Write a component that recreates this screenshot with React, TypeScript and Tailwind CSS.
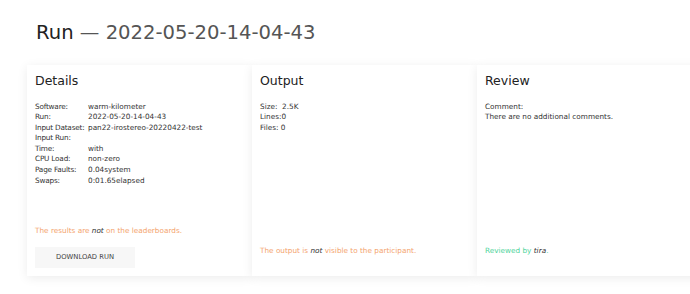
const font = { fontFamily: '"DejaVu Sans", Verdana, sans-serif' }

const details: [string, string][] = [
  ["Software:", "warm-kilometer"],
  ["Run:", "2022-05-20-14-04-43"],
  ["Input Dataset:", "pan22-irostereo-20220422-test"],
  ["Input Run:", ""],
  ["Time:", "with"],
  ["CPU Load:", "non-zero"],
  ["Page Faults:", "0.04system"],
  ["Swaps:", "0:01.65elapsed"],
]

const Card = ({ title, children }: { title: string; children: React.ReactNode }) => {
  return (
    <div className="flex h-[211px] w-[225px] shrink-0 flex-col bg-white px-2 pt-[9px] shadow-[0_2px_10px_rgba(0,0,0,0.08)]">
      <h2 className="text-[12.5px] leading-[14.5px] text-[#222]">{title}</h2>
      {children}
    </div>
  )
}

export default function App() {
  return (
    <div className="h-[294px] w-[690px] overflow-hidden bg-white text-[#333]" style={font}>
      <h1 className="pl-9 pt-[21px] text-[19.6px] leading-[23px]">
        <span className="text-[#222]">Run</span>
        <span className="text-[#555]"> — 2022-05-20-14-04-43</span>
      </h1>

      <div className="mt-[21px] flex pl-[27px]">
        <Card title="Details">
          <div className="mt-[13px] grid grid-cols-[53px_auto] text-[7.3px] leading-[10.6px] text-[#333]">
            {details.map(([k, v]) => (
              <div key={k} className="contents">
                <span className="whitespace-nowrap tracking-[-0.2px]">{k}</span>
                <span className="whitespace-nowrap">{v || "\u00a0"}</span>
              </div>
            ))}
          </div>
          <p className="mt-auto text-[7.3px] leading-[10px] text-[#f4a46e]">
            The results are <em className="text-[#333]">not</em> on the leaderboards.
          </p>
          <button className="mb-2 mt-[11px] h-[21px] w-[100px] bg-[#f7f7f7] text-[6.8px] text-[#444]">
            DOWNLOAD RUN
          </button>
        </Card>

        <Card title="Output">
          <div className="mt-[13px] text-[7.3px] leading-[10.6px] text-[#333]">
            <p>Size:&nbsp; 2.5K</p>
            <p>Lines:0</p>
            <p>Files: 0</p>
          </div>
          <p className="mb-[20px] mt-auto text-[7.3px] leading-[10px] text-[#f4a46e]">
            The output is <em className="text-[#333]">not</em> visible to the participant.
          </p>
        </Card>

        <Card title="Review">
          <div className="mt-[13px] text-[7.3px] leading-[10.6px] text-[#333]">
            <p>Comment:</p>
            <p>There are no additional comments.</p>
          </div>
          <p className="mb-[20px] mt-auto text-[7.3px] leading-[10px] text-[#4fd49c]">
            Reviewed by <em className="text-[#333]">tira</em>.
          </p>
        </Card>
      </div>
    </div>
  )
}
